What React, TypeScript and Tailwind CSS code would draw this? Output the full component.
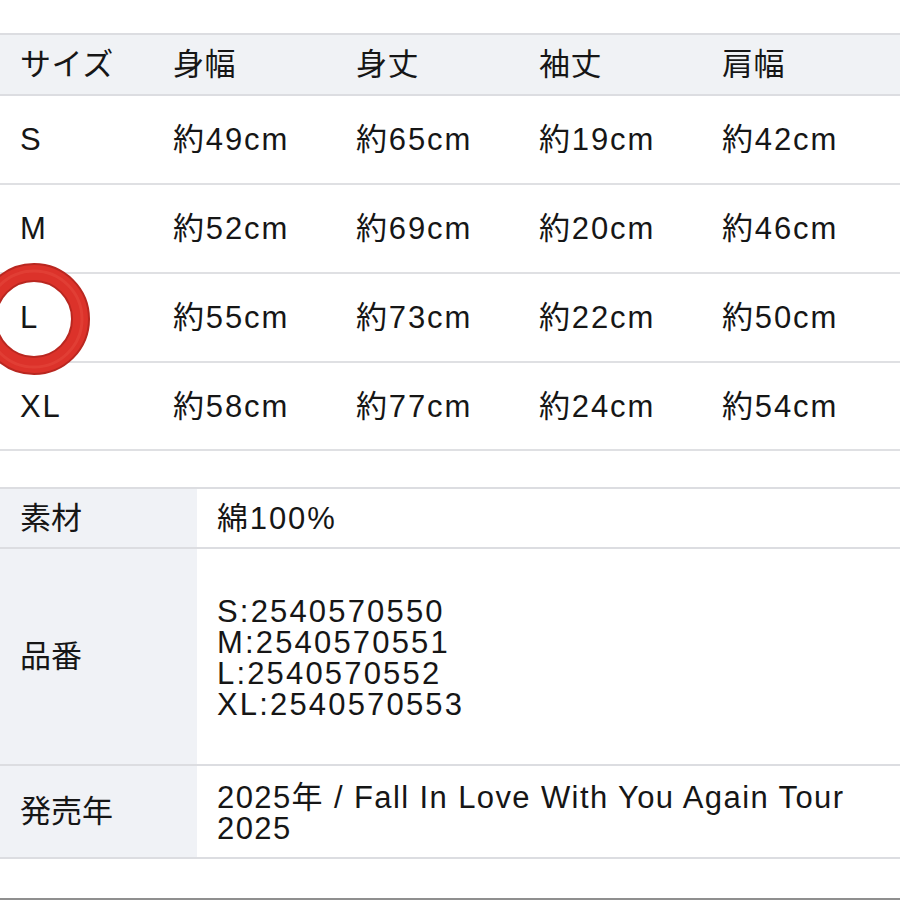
import React from 'react';

const sizeRows = [
  ['S', '約49cm', '約65cm', '約19cm', '約42cm'],
  ['M', '約52cm', '約69cm', '約20cm', '約46cm'],
  ['L', '約55cm', '約73cm', '約22cm', '約50cm'],
  ['XL', '約58cm', '約77cm', '約24cm', '約54cm'],
];

const header = ['サイズ', '身幅', '身丈', '袖丈', '肩幅'];

const cols = 'grid grid-cols-[153px_183px_183px_183px_1fr]';

// iOS-style ⭕ mark drawn over the "L" row
const RedCircle = () => (
  <svg width="124" height="124" viewBox="0 0 124 124" className="absolute left-[-28px] top-[257px]">
    <circle cx="62" cy="62" r="46.5" fill="none" stroke="#b92720" strokeWidth="19" />
    <circle cx="62" cy="62" r="46.5" fill="none" stroke="#dc322a" strokeWidth="15" />
    <circle cx="62" cy="62" r="48" fill="none" stroke="#e4463c" strokeWidth="3" opacity="0.6" />
  </svg>
);

export default function App() {
  return (
    <div className="relative w-[900px] h-[900px] overflow-hidden bg-white pt-[33px] text-[31px] leading-[31px] text-[#161616] font-['Liberation_Sans','Noto_Sans_CJK_JP',sans-serif]">
      <div className="flex flex-col">
        <div className={`${cols} h-[63px] items-center border-y-2 border-[#dcdde1] bg-[#f0f2f5]`}>
          {header.map((h) => (
            <div key={h} className="pl-5 tracking-[0.02em]">{h}</div>
          ))}
        </div>
        {sizeRows.map((row, i) => (
          <div
            key={row[0]}
            className={`${cols} ${i === 3 ? 'h-[88px]' : 'h-[89px]'} items-center border-b-2 border-[#dfe0e3]`}
          >
            {row.map((cell, j) => (
              <div key={j} className="pl-5 tracking-[0.06em]">{cell}</div>
            ))}
          </div>
        ))}
      </div>

      <div className="mt-[36px] flex flex-col border-t-2 border-[#dcdde1]">
        <div className="flex h-[60px] border-b-2 border-[#dcdde1]">
          <div className="flex w-[197px] items-center bg-[#f0f2f6] pl-5">素材</div>
          <div className="flex flex-1 items-center pl-5 tracking-[0.06em]">綿100%</div>
        </div>
        <div className="flex h-[217px] border-b-2 border-[#dcdde1]">
          <div className="flex w-[197px] items-center bg-[#f0f2f6] pl-5">品番</div>
          <div className="flex flex-1 flex-col justify-center pl-5 pt-[2px] tracking-[0.07em]">
            <div>S:2540570550</div>
            <div>M:2540570551</div>
            <div>L:2540570552</div>
            <div>XL:2540570553</div>
          </div>
        </div>
        <div className="flex h-[93px] border-b-2 border-[#dcdde1]">
          <div className="flex w-[197px] items-center bg-[#f0f2f6] pl-5">発売年</div>
          <div className="flex flex-1 flex-col justify-center pl-5 pt-[2px] tracking-[0.045em]">
            <div>2025年 / Fall In Love With You Again Tour</div>
            <div>2025</div>
          </div>
        </div>
      </div>

      <div className="mt-[39px] h-[2px] bg-[#8f8f8f]" />

      <RedCircle />
    </div>
  );
}
